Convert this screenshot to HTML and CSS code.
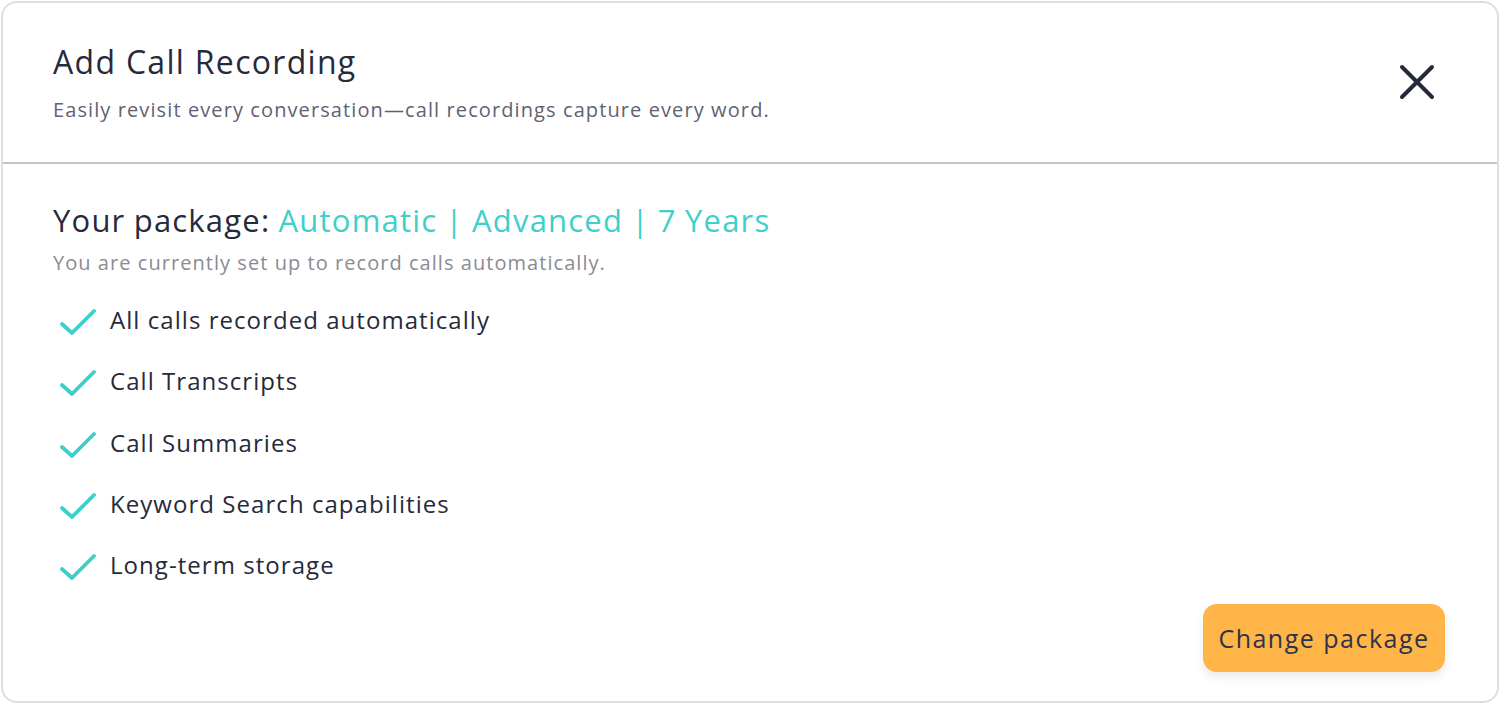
FILE: index.html
```html
<!DOCTYPE html>
<html>
<head>
<meta charset="utf-8">
<link rel="stylesheet" href="styles.css">
</head>
<body>
<div class="card">
  <div class="header">
    <div class="titles">
      <h1 class="title">Add Call Recording</h1>
      <p class="subtitle">Easily revisit every conversation—call recordings capture every word.</p>
    </div>
    <button class="close" aria-label="Close">
      <svg width="36" height="36" viewBox="0 0 36 36"><path d="M3 3 L33 33 M33 3 L3 33" stroke="#252a3a" stroke-width="4" stroke-linecap="round"/></svg>
    </button>
  </div>
  <div class="body">
    <h2 class="pkg">Your package: <span class="accent">Automatic | Advanced | 7 Years</span></h2>
    <p class="pkg-sub">You are currently set up to record calls automatically.</p>
    <ul class="features">
      <li><svg class="check" width="36" height="28" viewBox="0 0 36 28"><path d="M2 16 L12 25 L34 3" fill="none" stroke="#3ecfcb" stroke-width="3.8" stroke-linecap="round" stroke-linejoin="round"/></svg>All calls recorded automatically</li>
      <li><svg class="check" width="36" height="28" viewBox="0 0 36 28"><path d="M2 16 L12 25 L34 3" fill="none" stroke="#3ecfcb" stroke-width="3.8" stroke-linecap="round" stroke-linejoin="round"/></svg>Call Transcripts</li>
      <li><svg class="check" width="36" height="28" viewBox="0 0 36 28"><path d="M2 16 L12 25 L34 3" fill="none" stroke="#3ecfcb" stroke-width="3.8" stroke-linecap="round" stroke-linejoin="round"/></svg>Call Summaries</li>
      <li><svg class="check" width="36" height="28" viewBox="0 0 36 28"><path d="M2 16 L12 25 L34 3" fill="none" stroke="#3ecfcb" stroke-width="3.8" stroke-linecap="round" stroke-linejoin="round"/></svg>Keyword Search capabilities</li>
      <li><svg class="check" width="36" height="28" viewBox="0 0 36 28"><path d="M2 16 L12 25 L34 3" fill="none" stroke="#3ecfcb" stroke-width="3.8" stroke-linecap="round" stroke-linejoin="round"/></svg>Long-term storage</li>
    </ul>
    <div class="actions">
      <button class="btn">Change package</button>
    </div>
  </div>
</div>
</body>
</html>
```
FILE: styles.css
```css
* { box-sizing: border-box; }
html, body { margin: 0; padding: 0; background: #ffffff; }
body {
  font-family: "Open Sans", "Lato", sans-serif;
  color: #262a3b;
  padding: 1px;
}
.card {
  width: 1498px;
  height: 702px;
  border: 2px solid #dedede;
  border-radius: 16px;
  background: #fff;
  display: flex;
  flex-direction: column;
}
.header {
  display: flex;
  justify-content: space-between;
  align-items: center;
  padding: 0 62px 0 50px;
  height: 161px;
  border-bottom: 2px solid #c4c4cb;
}
.title {
  margin: 0;
  font-size: 32px;
  font-weight: 400;
  line-height: 40px;
  letter-spacing: 1.3px;
  color: #262a3b;
}
.subtitle {
  margin: 15px 0 0;
  font-size: 20px;
  line-height: 26px;
  letter-spacing: 1.1px;
  color: #5f6272;
}
.close {
  background: none;
  border: none;
  padding: 0;
  width: 36px;
  height: 36px;
  margin-bottom: 2px;
}
.body {
  padding: 36px 52px 0 50px;
  display: flex;
  flex-direction: column;
  flex: 1;
}
.pkg {
  margin: 0;
  font-size: 31px;
  font-weight: 400;
  line-height: 40px;
  letter-spacing: 1.2px;
  word-spacing: -1px;
  color: #262a3b;
}
.accent { color: #3ecfcb; }
.pkg-sub {
  margin: 10px 0 0;
  font-size: 20px;
  line-height: 26px;
  letter-spacing: 1.05px;
  color: #8a8b94;
}
.features {
  list-style: none;
  margin: 28px 0 0;
  padding: 0 0 0 7px;
  display: flex;
  flex-direction: column;
  gap: 29.25px;
}
.features li {
  display: flex;
  align-items: center;
  gap: 14px;
  font-size: 24px;
  line-height: 32px;
  height: 32px;
  letter-spacing: 1.05px;
  color: #262a3b;
}
.check { flex: none; margin-top: 4px; }
.actions {
  display: flex;
  justify-content: flex-end;
  margin-top: 23px;
}
.btn {
  font-family: inherit;
  font-size: 25px;
  letter-spacing: 1.5px;
  color: #2f3347;
  background: #ffb547;
  border: none;
  border-radius: 14px;
  width: 242px;
  height: 68px;
  box-shadow: 0 6px 10px rgba(0,0,0,0.08);
}
```
